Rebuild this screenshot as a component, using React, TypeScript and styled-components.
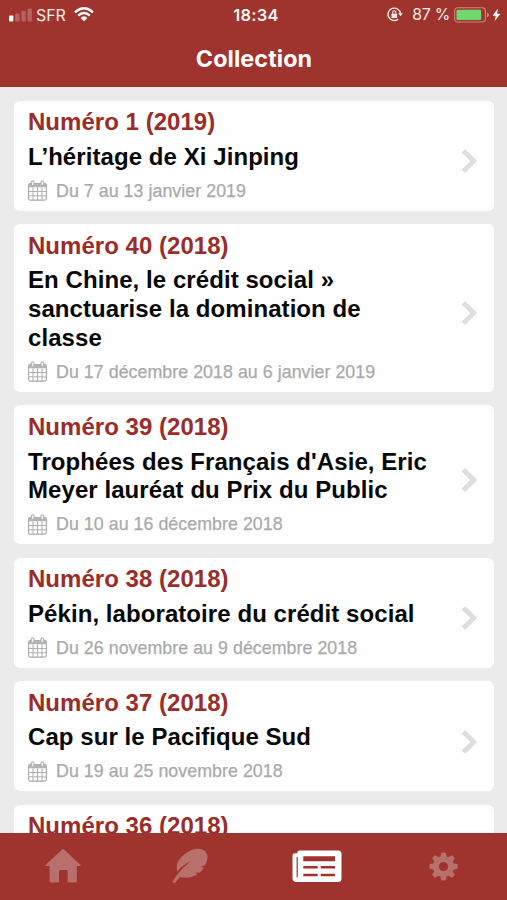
import React from "react";
import styled, { createGlobalStyle } from "styled-components";

const GlobalStyle = createGlobalStyle`
  * { box-sizing: border-box; }
  html, body { margin: 0; padding: 0; overflow: hidden; }
  svg { display: block; flex: none; }
`;

const Screen = styled.div`
  display: flex;
  flex-direction: column;
  width: 507px;
  height: 900px;
  overflow: hidden;
  background: #ebebeb;
  font-family: "Liberation Sans", Arial, sans-serif;
`;

const Header = styled.header`
  flex: none;
  height: 87px;
  background: #9f342e;
  color: #fff;
  font-family: Inter, sans-serif;
`;

const StatusBar = styled.div`
  display: grid;
  grid-template-columns: 1fr auto 1fr;
  align-items: center;
  height: 29px;
  padding: 0 6px 0 9px;
  font-size: 16px;
  color: #fbebe7;
`;

const StatusLeft = styled.div`
  display: flex;
  align-items: center;
`;

const StatusRight = styled.div`
  display: flex;
  align-items: center;
  justify-content: flex-end;
`;

const Carrier = styled.span`
  margin: 0 8px 0 3px;
  letter-spacing: -0.1px;
`;

const Clock = styled.time`
  margin-left: 2px;
  font-size: 16.5px;
  font-weight: 600;
  letter-spacing: 0.25px;
  color: #fff4f0;
`;

const Percent = styled.span`
  margin: 0 4px 0 9px;
  font-size: 15.8px;
  letter-spacing: -0.2px;
`;

const Title = styled.h1`
  margin: 0;
  padding: 16px 0 0 1px;
  font-size: 23.3px;
  line-height: 28px;
  font-weight: 650;
  letter-spacing: 0.1px;
  text-align: center;
`;

const List = styled.main`
  flex: 1;
  min-height: 0;
  display: flex;
  flex-direction: column;
  gap: 13.5px;
  padding: 13.6px 13.5px 0 14px;
  overflow: hidden;
`;

const Card = styled.article`
  flex: none;
  display: flex;
  align-items: center;
  justify-content: space-between;
  padding: 6.5px 16px 8.5px 14px;
  border-radius: 6px;
  background: #fefefe;
`;

const CardBody = styled.div`
  width: 410px;
`;

const Issue = styled.h2`
  margin: 0 0 6.7px;
  font-size: 24px;
  line-height: 29px;
  font-weight: 700;
  letter-spacing: 0.03px;
  color: #9b2d29;
`;

const Headline = styled.h3`
  margin: 0 0 7.4px;
  font-size: 24px;
  line-height: 28.8px;
  font-weight: 700;
  letter-spacing: 0.07px;
  color: #080808;
  white-space: nowrap;
`;

const DateRow = styled.div`
  display: flex;
  align-items: center;
  gap: 9px;
  height: 23.2px;
  color: #aaa;
  font-size: 17.8px;
  white-space: nowrap;
`;

const DateText = styled.span`
  padding-top: 1px;
  letter-spacing: 0.05px;
  -webkit-text-stroke: 0.25px #aaa;
`;

const ChevronSlot = styled.div`
  padding-top: 13px;
`;

const TabBar = styled.nav`
  flex: none;
  display: grid;
  grid-template-columns: repeat(4, 1fr);
  height: 67.5px;
  background: #9f342e;
`;

const Tab = styled.div<{ $active?: boolean }>`
  display: flex;
  align-items: center;
  justify-content: center;
  color: ${(p) => (p.$active ? "#fff" : "#b7706b")};
`;

const SignalIcon = () => (
  <svg width="24" height="14" viewBox="0 0 24 14" fill="#fff">
    <rect x="0" y="7.5" width="4.4" height="6" rx="1" />
    <g opacity="0.23">
      <rect x="6.2" y="5.5" width="4.4" height="8" rx="1" />
      <rect x="12.4" y="3" width="4.4" height="10.5" rx="1" />
      <rect x="18.5" y="0.5" width="4.4" height="13" rx="1" />
    </g>
  </svg>
);

const WifiIcon = () => (
  <svg width="20" height="15" viewBox="0 0 20 15" fill="none" stroke="#fff" strokeWidth="2.4">
    <path d="M1 5.3Q10-2.6 19 5.3M4.2 8.7Q10 3.4 15.8 8.7" />
    <path d="M6.6 10.9Q10 7.8 13.4 10.9L10 14.3Z" fill="#fff" stroke="none" />
  </svg>
);

const LockIcon = () => (
  <svg width="16" height="15" viewBox="0 0 16 15" fill="none" stroke="#fbebe7">
    <path d="M13.4 6.4A6.2 6.2 0 1 0 11.2 12.1" strokeWidth="1.4" />
    <path d="M11.2 6.3H15.8L13.5 9.2Z" fill="#fbebe7" stroke="none" />
    <rect x="4.5" y="6.7" width="5.6" height="4.2" rx=".5" fill="#fbebe7" stroke="none" />
    <path d="M5.7 7V5.4A1.6 1.6 0 0 1 8.9 5.4V7" strokeWidth="1.1" />
  </svg>
);

const BatteryIcon = () => (
  <svg width="38" height="16" viewBox="0 0 38 16">
    <rect x=".6" y=".8" width="30.8" height="14.2" rx="3.2" fill="none" stroke="#c9857d" strokeWidth="1.1" />
    <rect x="2.5" y="2.7" width="24.6" height="10.4" rx="1.2" fill="#70d76d" />
    <path d="M33 5.4Q35 6 35 7.9T33 10.4Z" fill="#c9857d" />
  </svg>
);

const BoltIcon = () => (
  <svg width="9" height="14" viewBox="0 0 9 14" fill="#fff">
    <path d="M6 .5L.6 7.8H3.8L2.6 13.2L8.4 5.7H5Z" />
  </svg>
);

const CalendarIcon = () => (
  <svg width="19" height="21" viewBox="0 0 19 21" fill="none" stroke="#a9a9a9">
    <rect x=".6" y="3.5" width="17.8" height="16.6" rx="1.5" strokeWidth="1.1" />
    <path d="M.6 7.3V5Q.6 3.5 2.1 3.5H16.9Q18.4 3.5 18.4 5V7.3Z" fill="#b5b5b5" stroke="none" />
    <path d="M.6 11.5H18.4M.6 15.8H18.4M5 7.3V20M9.5 7.3V20M14 7.3V20" strokeWidth=".9" />
    <rect x="3.2" y=".8" width="3" height="4.8" rx="1.4" fill="#eee" />
    <rect x="12.8" y=".8" width="3" height="4.8" rx="1.4" fill="#eee" />
  </svg>
);

const ChevronIcon = () => (
  <svg width="17" height="26" viewBox="0 0 17 26" fill="none" stroke="#dedede" strokeWidth="4.8">
    <path d="M2.4 2.8L12.8 13L2.4 23.2" />
  </svg>
);

const HomeIcon = () => (
  <svg width="36" height="34" viewBox="0 0 36 34" fill="currentColor">
    <path d="M18.9.4L35.4 15.8Q36.2 17 34.9 17H31.8V32Q31.8 33.6 30.2 33.6H22.7V22.5Q22.7 21 21.2 21H15.4Q14 21 14 22.5V33.6H6.2Q4.6 33.6 4.6 32V17H1.1Q-.2 17 .6 15.8L17.1.4Q18-.3 18.9.4Z" />
  </svg>
);

const FeatherIcon = () => (
  <svg width="36" height="36" viewBox="0 0 36 36" fill="currentColor">
    <path d="M.6 33.8Q2.8 29.3 7 24.6Q12 18.4 18.4 13.5Q11 16.8 5.2 23.4Q2.6 14 12.5 6.3Q20.5-.6 29 1Q35.7 3 35.5 9.9Q35.2 13.5 33 17.3L29 18.4L31.7 19.4Q30.2 22.4 27.8 24.4L23.4 24.7L25.6 26.6Q17.6 31.2 8.2 28.9L3.4 34.5Q1.7 36 .6 33.8Z" />
  </svg>
);

const NewsIcon = () => (
  <svg width="50" height="33" viewBox="0 0 50 33">
    <path d="M8 .5H46Q49.5.5 49.5 4V28.5Q49.5 32 46 32H4.4Q.5 32 .5 28V5.5Q.5 3.3 2.7 3.3H5.2Q5.2.5 8 .5Z" fill="#fff" />
    <path d="M5.2 7V27.2" stroke="#9f342e" strokeWidth="1.2" />
    <path d="M11.3 6.3H43V11.2H11.3ZM11.3 15.9H25.7V18.4H11.3ZM28.7 15.9H43V18.4H28.7ZM11.3 23.7H25.7V26.3H11.3ZM28.7 23.7H43V26.3H28.7Z" fill="#9f342e" />
  </svg>
);

const GearIcon = () => (
  <svg width="29" height="29" viewBox="-14.5 -14.5 29 29" fill="currentColor">
    <circle r="7.6" fill="none" stroke="currentColor" strokeWidth="6" />
    {[0, 45, 90, 135, 180, 225, 270, 315].map((angle) => (
      <path key={angle} d="M-3.5-8L-2.4-13.3Q-2.2-14-1.5-14H1.5Q2.2-14 2.4-13.3L3.5-8Z" transform={`rotate(${angle})`} />
    ))}
  </svg>
);

const issues = [
  { issue: "Numéro 1 (2019)", lines: ["L’héritage de Xi Jinping"], date: "Du 7 au 13 janvier 2019" },
  {
    issue: "Numéro 40 (2018)",
    lines: ["En Chine, le crédit social »", "sanctuarise la domination de", "classe"],
    date: "Du 17 décembre 2018 au 6 janvier 2019",
  },
  {
    issue: "Numéro 39 (2018)",
    lines: ["Trophées des Français d'Asie, Eric", "Meyer lauréat du Prix du Public"],
    date: "Du 10 au 16 décembre 2018",
  },
  { issue: "Numéro 38 (2018)", lines: ["Pékin, laboratoire du crédit social"], date: "Du 26 novembre au 9 décembre 2018" },
  { issue: "Numéro 37 (2018)", lines: ["Cap sur le Pacifique Sud"], date: "Du 19 au 25 novembre 2018" },
];

export default function App() {
  return (
    <>
      <GlobalStyle />
      <Screen>
        <Header>
          <StatusBar>
            <StatusLeft>
              <SignalIcon />
              <Carrier>SFR</Carrier>
              <WifiIcon />
            </StatusLeft>
            <Clock>18:34</Clock>
            <StatusRight>
              <LockIcon />
              <Percent>87 %</Percent>
              <BatteryIcon />
              <BoltIcon />
            </StatusRight>
          </StatusBar>
          <Title>Collection</Title>
        </Header>
        <List>
          {issues.map((item) => (
            <Card key={item.issue}>
              <CardBody>
                <Issue>{item.issue}</Issue>
                <Headline>
                  {item.lines.map((line, i) => (
                    <React.Fragment key={line}>
                      {i > 0 && <br />}
                      {line}
                    </React.Fragment>
                  ))}
                </Headline>
                <DateRow>
                  <CalendarIcon />
                  <DateText>{item.date}</DateText>
                </DateRow>
              </CardBody>
              <ChevronSlot>
                <ChevronIcon />
              </ChevronSlot>
            </Card>
          ))}
          <Card>
            <CardBody>
              <Issue>Numéro 36 (2018)</Issue>
            </CardBody>
          </Card>
        </List>
        <TabBar>
          <Tab><HomeIcon /></Tab>
          <Tab><FeatherIcon /></Tab>
          <Tab $active><NewsIcon /></Tab>
          <Tab><GearIcon /></Tab>
        </TabBar>
      </Screen>
    </>
  );
}
